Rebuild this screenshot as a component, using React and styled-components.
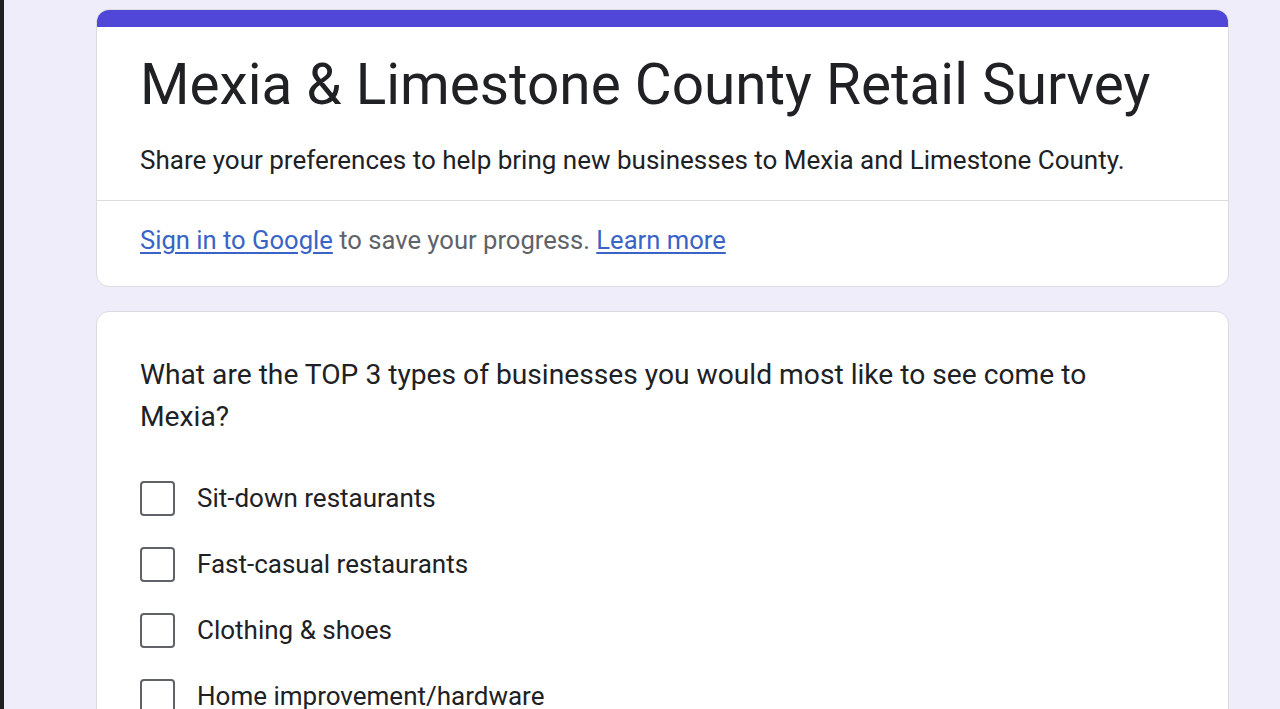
import React from 'react';
import styled, { createGlobalStyle } from 'styled-components';

const GlobalStyle = createGlobalStyle`
  html, body {
    margin: 0;
    padding: 0;
    background: #efedfa;
    font-family: Roboto, 'Noto Sans', Arial, sans-serif;
    color: #202124;
    overflow: hidden;
  }
`;

const Page = styled.div`
  display: flex;
  min-height: 709px;
  border-left: 4px solid #1f1f1f;
`;

const Column = styled.div`
  display: flex;
  flex-direction: column;
  gap: 24px;
  width: 1133px;
  margin: 9px 0 0 92px;
`;

const Card = styled.div`
  background: #ffffff;
  border: 1px solid #dadce0;
  border-radius: 13px;
  overflow: hidden;
`;

const TopBar = styled.div`
  height: 18px;
  margin: -1px -1px 0;
  background: #5046d8;
`;

const Section = styled.div`
  padding: ${(p) => p.pad};
  border-top: ${(p) => (p.divided ? '1px solid #dadce0' : 'none')};
`;

const Title = styled.h1`
  margin: 0;
  font-size: 56.7px;
  line-height: 64px;
  font-weight: 400;
  color: #202124;
`;

const Description = styled.p`
  margin: 28px 0 0;
  font-size: 26px;
  line-height: 30px;
  color: #202124;
`;

const Notice = styled.p`
  margin: 0;
  font-size: 25.6px;
  line-height: 30px;
  color: #5f6368;
`;

const TextLink = styled.a`
  color: #3a63c8;
  text-decoration: underline;
  text-underline-offset: 3px;
`;

const Question = styled.div`
  max-width: 1000px;
  font-size: 28.2px;
  line-height: 42px;
  color: #202124;
  margin-bottom: 27px;
`;

const Option = styled.label`
  display: flex;
  align-items: center;
  gap: 22px;
  height: 66px;
  font-size: 26px;
  color: #202124;
`;

const Box = styled.span`
  box-sizing: border-box;
  width: 35px;
  height: 35px;
  border: 2.5px solid #5f6368;
  border-radius: 4px;
  flex-shrink: 0;
`;

const options = [
  'Sit-down restaurants',
  'Fast-casual restaurants',
  'Clothing & shoes',
  'Home improvement/hardware',
];

const App = () => {
  return (
    <>
      <GlobalStyle />
      <Page>
        <Column>
          <Card>
            <TopBar />
            <Section pad='26px 43px 25px'>
              <Title>Mexia &amp; Limestone County Retail Survey</Title>
              <Description>
                Share your preferences to help bring new businesses to Mexia and Limestone County.
              </Description>
            </Section>
            <Section divided pad='24px 43px 31px'>
              <Notice>
                <TextLink href='#'>Sign in to Google</TextLink> to save your progress.{' '}
                <TextLink href='#'>Learn more</TextLink>
              </Notice>
            </Section>
          </Card>
          <Card>
            <Section pad='42px 43px 30px'>
              <Question>
                What are the TOP 3 types of businesses you would most like to see come to Mexia?
              </Question>
              {options.map((o) => (
                <Option key={o}>
                  <Box />
                  {o}
                </Option>
              ))}
            </Section>
          </Card>
        </Column>
      </Page>
    </>
  );
};

export default App;
